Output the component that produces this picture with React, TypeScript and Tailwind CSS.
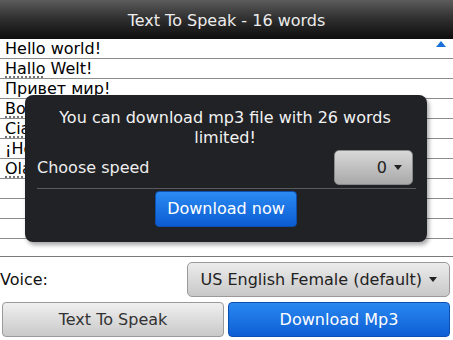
import React from "react";

const rows = [
  { t: "Hello world!", u: "" },
  { t: "Hallo Welt!", u: "Hallo" },
  { t: "Привет мир!", u: "" },
  { t: "Bonjour le monde!", u: "Bonjour" },
  { t: "Ciao mondo!", u: "Ciao" },
  { t: "¡Hola mundo!", u: "" },
  { t: "Olá mundo!", u: "Olá" },
  { t: "", u: "" },
  { t: "", u: "" },
  { t: "", u: "" },
];

function Caret({ className = "" }: { className?: string }) {
  return (
    <svg width="8" height="5" viewBox="0 0 8 5" className={className}>
      <path d="M0 0 H8 L4 5 Z" fill="currentColor" />
    </svg>
  );
}

export default function App() {
  return (
    <div
      className="relative w-[453px] h-[340px] overflow-hidden bg-white text-[16px] leading-[20px]"
      style={{ fontFamily: '"DejaVu Sans", sans-serif' }}
    >
      {/* Title bar */}
      <div className="h-[39px] flex items-center justify-center bg-gradient-to-b from-[#5c5c5c] via-[#2e2e2e] to-[#0e0e0e] text-[#ececec] pt-[2px]">
        Text To Speak - 16 words
      </div>

      {/* List */}
      <div className="relative h-[218px] border-b border-[#7a7a7a]">
        {rows.map((r, i) => (
          <div
            key={i}
            className="h-[20px] border-b border-[#8c8c8c] pl-[5px] text-black leading-[19px] whitespace-nowrap"
          >
            {r.u ? (
              <>
                <span className="underline decoration-dotted decoration-[#555] underline-offset-[3px]">
                  {r.u}
                </span>
                {r.t.slice(r.u.length)}
              </>
            ) : (
              r.t
            )}
          </div>
        ))}
        <svg
          width="10"
          height="6"
          viewBox="0 0 10 6"
          className="absolute right-[7px] top-[2px]"
        >
          <path d="M0 6 L5 0 L10 6 Z" fill="#1a6fd8" />
        </svg>
      </div>

      {/* Voice row */}
      <div className="flex items-center justify-between pt-[5px] pr-[3px]">
        <span className="text-[#111]">Voice:</span>
        <div className="w-[263px] h-[35px] flex items-center justify-end gap-[7px] pr-[12px] rounded-[5px] border border-[#9a9a9a] bg-gradient-to-b from-[#ececec] to-[#c8c8c8] text-[#222]">
          <span>US English Female (default)</span>
          <Caret className="text-[#222]" />
        </div>
      </div>

      {/* Buttons */}
      <div className="flex gap-[4px] px-[2px] pt-[5px]">
        <div className="w-[222px] h-[35px] flex items-center justify-center rounded-[4px] border border-[#9a9a9a] bg-gradient-to-b from-[#f0f0f0] to-[#c9c9c9] text-[#333]">
          Text To Speak
        </div>
        <div className="w-[222px] h-[35px] flex items-center justify-center rounded-[4px] border border-[#0d4fb0] bg-gradient-to-b from-[#2a88f0] to-[#0e5ed4] text-white">
          Download Mp3
        </div>
      </div>

      {/* Dialog */}
      <div className="absolute left-[25px] top-[95px] w-[402px] h-[147px] rounded-[8px] bg-[#212226] shadow-[2px_3px_4px_rgba(0,0,0,0.35)] pt-[13px] pl-[12px] pr-[14px] flex flex-col">
        <div className="text-center text-[#f2f2f2] pr-[0px]">
          You can download mp3 file with 26 words
          <br />
          limited!
        </div>
        <div className="flex items-center justify-between mt-[2px]">
          <span className="text-[#ededed]">Choose speed</span>
          <div className="w-[79px] h-[35px] flex items-center justify-end gap-[7px] pr-[10px] rounded-[5px] border border-[#8a8a8a] bg-gradient-to-b from-[#d8d8d8] to-[#a9a9a9] text-[#222]">
            <span>0</span>
            <Caret />
          </div>
        </div>
        <div className="mt-[3px] mr-[-3px] h-px bg-[#5a5b5e]" />
        <div className="flex justify-center mt-[2px] pr-[0px]">
          <div className="w-[142px] h-[36px] flex items-center justify-center rounded-[4px] border border-[#0d4fb0] bg-gradient-to-b from-[#2a8af2] to-[#0c5cd2] text-white ml-[2px]">
            Download now
          </div>
        </div>
      </div>
    </div>
  );
}
